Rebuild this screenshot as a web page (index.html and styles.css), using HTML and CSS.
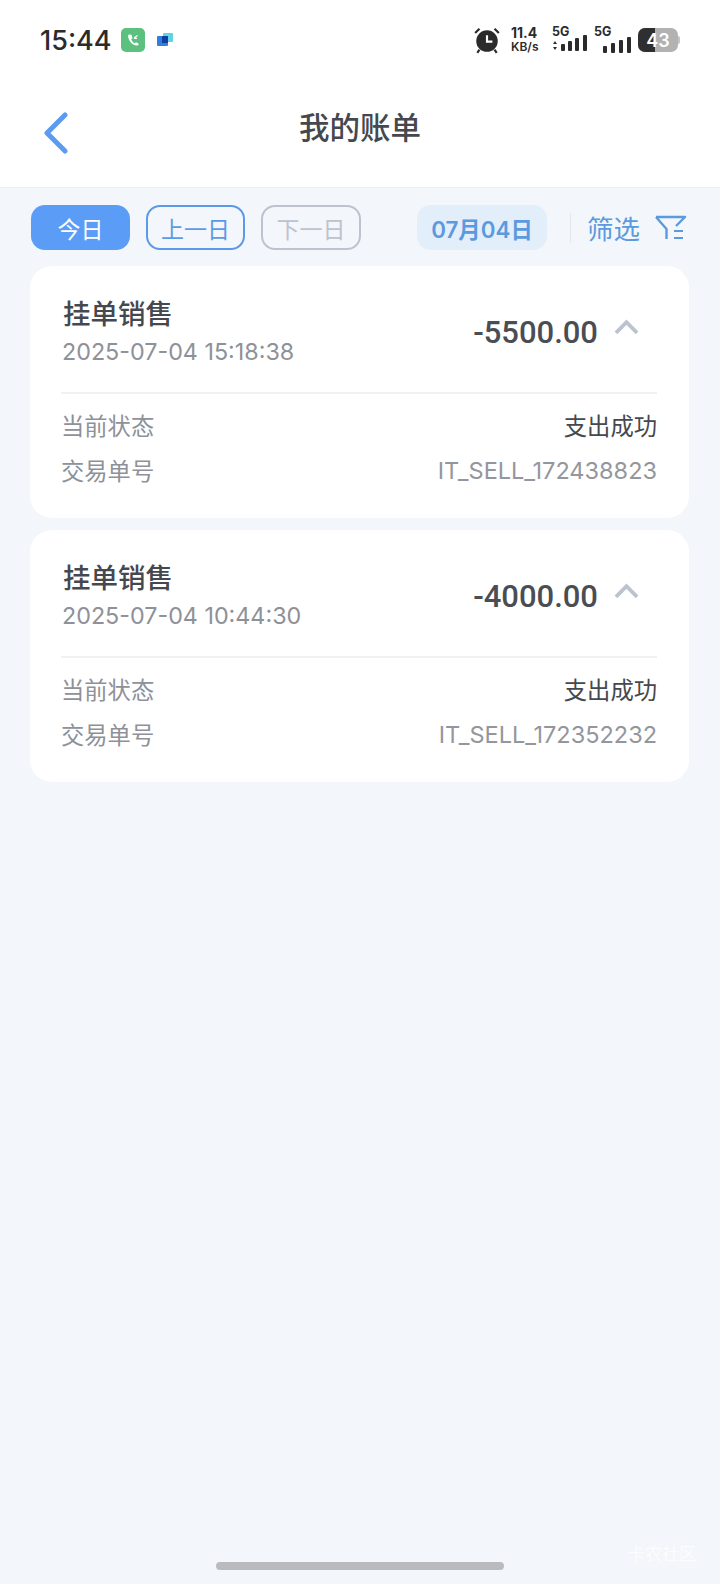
FILE: index.html
```html
<!DOCTYPE html>
<html lang="zh">
<head>
<meta charset="utf-8">
<title>我的账单</title>
<link rel="stylesheet" href="styles.css">
</head>
<body>
<div class="page">
  <header class="top">
    <div class="status">
      <div class="status-left">
        <span class="time">15:44</span>
        <svg class="app-icon" width="24" height="24" viewBox="0 0 24 24"><rect width="24" height="24" rx="5" fill="#5cc07f"/><path d="M7.500 6.500c-1 2 0 5 2 7.500s4.500 4 7 3.500c.8-.3 1.200-1 1.200-1.800l-2.700-1.500-1.500 1c-1.500-.8-2.800-2.500-3.300-4l1.300-1-1-3.500z" fill="#fff"/><path d="M13 10l3.500-2.500M13 10.300h3" stroke="#fff" stroke-width="1.200" fill="none"/></svg>
        <svg class="app-icon2" width="24" height="24" viewBox="0 0 24 24"><rect width="24" height="24" rx="4" fill="#fff"/><rect x="10" y="5" width="10" height="9" rx="1" fill="#5fd3e8"/><rect x="4" y="8" width="11" height="10" rx="1" fill="#2f7fdc"/><rect x="9" y="8" width="6" height="7" fill="#123f9e"/></svg>
      </div>
      <div class="status-right">
        <svg width="28" height="28" viewBox="0 0 26 26"><circle cx="13" cy="14" r="10" fill="#2b2b2b"/><path d="M13 8.500v6h5" stroke="#fff" stroke-width="2" fill="none"/><path d="M2 6.500L6 2.500M24 6.500L20 2.500M6 22l-2 3M20 22l2 3" stroke="#2b2b2b" stroke-width="2" fill="none"/></svg>
        <div class="speed"><span>11.4</span><span>KB/s</span></div>
        <div class="net">
          <span class="g">5G</span>
          <svg width="37" height="18" viewBox="0 0 37 18"><path d="M3 6L1 9h4zM3 15L1 12h4z" fill="#2b2b2b"/><rect x="9" y="9" width="4" height="7" rx="1" fill="#2b2b2b"/><rect x="16" y="6" width="4" height="10" rx="1" fill="#2b2b2b"/><rect x="23" y="3" width="4" height="13" rx="1" fill="#2b2b2b"/><rect x="31" y="0" width="4" height="16" rx="1" fill="#2b2b2b"/></svg>
        </div>
        <div class="net net2">
          <span class="g">5G</span>
          <svg width="28" height="16" viewBox="0 0 28 16"><rect x="0" y="9" width="4" height="7" rx="1" fill="#2b2b2b"/><rect x="8" y="6" width="4" height="10" rx="1" fill="#2b2b2b"/><rect x="16" y="3" width="4" height="13" rx="1" fill="#2b2b2b"/><rect x="24" y="0" width="4" height="16" rx="1" fill="#2b2b2b"/></svg>
        </div>
        <div class="battery"><span class="fill"></span><span class="level">43</span><span class="nub"></span></div>
      </div>
    </div>
    <div class="nav">
      <svg class="back" width="26" height="42" viewBox="0 0 26 42"><path d="M22 3L4 21l18 18" stroke="#5b9cf2" stroke-width="5" stroke-linecap="round" stroke-linejoin="round" fill="none"/></svg>
      <h1>我的账单</h1>
    </div>
  </header>

  <div class="toolbar">
    <span class="pill today">今日</span>
    <span class="pill prev">上一日</span>
    <span class="pill next">下一日</span>
    <span class="date">07月04日</span>
    <span class="sep"></span>
    <span class="filter">筛选</span>
    <svg class="filter-icon" width="32" height="26" viewBox="0 0 32 26"><path d="M1 2h29l-9 9M1 2l10.500 12v10" stroke="#5b9ade" stroke-width="2.400" fill="none" stroke-linejoin="round"/><path d="M19 16h9M19 23h9" stroke="#5b9ade" stroke-width="2.200" fill="none"/></svg>
  </div>

  <main class="list">
    <section class="card">
      <div class="card-head">
        <div class="head-left">
          <div class="title">挂单销售</div>
          <div class="stamp">2025-07-04 15:18:38</div>
        </div>
        <div class="amount">-5500.00</div>
        <svg class="chev" width="25" height="16" viewBox="0 0 26 16"><path d="M2 14L13 3l11 11" stroke="#bcc3cf" stroke-width="4" fill="none"/></svg>
      </div>
      <div class="row first"><span class="label">当前状态</span><span class="state">支出成功</span></div>
      <div class="row"><span class="label">交易单号</span><span class="order">IT_SELL_172438823</span></div>
    </section>
    <section class="card">
      <div class="card-head">
        <div class="head-left">
          <div class="title">挂单销售</div>
          <div class="stamp">2025-07-04 10:44:30</div>
        </div>
        <div class="amount">-4000.00</div>
        <svg class="chev" width="25" height="16" viewBox="0 0 26 16"><path d="M2 14L13 3l11 11" stroke="#bcc3cf" stroke-width="4" fill="none"/></svg>
      </div>
      <div class="row first"><span class="label">当前状态</span><span class="state">支出成功</span></div>
      <div class="row"><span class="label">交易单号</span><span class="order">IT_SELL_172352232</span></div>
    </section>
  </main>

  <footer class="foot">
    <div class="home"></div>
    <span class="mark">卡农社区</span>
  </footer>
</div>
</body>
</html>
```

FILE: styles.css
```css
* { box-sizing: border-box; }
html, body { margin: 0; padding: 0; }
body {
  width: 720px;
  height: 1584px;
  overflow: hidden;
  background: #f3f6fb;
  font-family: "Inter", "Noto Sans CJK SC", sans-serif;
  color: #45484e;
}
.page { height: 1584px; display: flex; flex-direction: column; }

.top { background: #fff; height: 188px; border-bottom: 1px solid #ebeef3; }
.status {
  height: 80px;
  padding: 0 42px 0 40px;
  display: flex;
  align-items: center;
  justify-content: space-between;
}
.status-left { display: flex; align-items: center; }
.time { font-size: 27px; font-weight: 500; color: #2b2b2b; width: 80px; }
.app-icon { margin-left: 1px; }
.app-icon2 { margin-left: 8px; }
.status-right { display: flex; align-items: center; }
.speed {
  margin-left: 10px;
  display: flex;
  flex-direction: column;
  font-weight: 700;
  color: #2b2b2b;
  line-height: 14px;
  width: 30px;
  white-space: nowrap;
}
.speed span:first-child { font-size: 14px; }
.speed span:last-child { font-size: 12px; font-weight: 600; }
.net { position: relative; width: 37px; height: 26px; margin-left: 11px; display: flex; align-items: flex-end; }
.net2 { margin-left: 5px; justify-content: flex-end; }
.g {
  position: absolute;
  left: 0;
  top: -2px;
  font-size: 12.500px;
  font-weight: 700;
  line-height: 14px;
  color: #2b2b2b;
}
.battery {
  position: relative;
  margin-left: 7px;
  width: 40px;
  height: 24px;
  border-radius: 7px;
  background: #b2b2b2;
  display: flex;
  align-items: center;
  justify-content: center;
}
.fill { position: absolute; left: 0; top: 0; bottom: 0; width: 17px; background: #2f2f2f; border-radius: 7px 0 0 7px; }
.level { position: relative; font-size: 18px; font-weight: 600; color: #fff; }
.nub { position: absolute; right: -2px; top: 8px; width: 2px; height: 8px; border-radius: 0 2px 2px 0; background: #c4c4c4; }

.nav { position: relative; height: 107px; display: flex; align-items: center; justify-content: center; }
.back { position: absolute; left: 43px; top: 32px; }
h1 { margin: 0 0 16px; font-size: 30.500px; font-weight: 500; color: #45484e; }

.toolbar { display: flex; align-items: center; padding: 17px 0 0 31px; height: 62px; }
.pill {
  width: 99px;
  height: 45px;
  border-radius: 14px;
  font-size: 23px;
  display: flex;
  align-items: center;
  justify-content: center;
  flex: none;
}
.today { background: #5b9cf6; color: #fff; }
.prev { margin-left: 16px; border: 2px solid #5b9ae8; color: #5b9ae8; }
.next { margin-left: 16px; width: 100px; border: 2px solid #bcc3cf; color: #bcc3cf; }
.date {
  margin-left: 56px;
  width: 130px;
  height: 45px;
  border-radius: 14px;
  background: #e3eefb;
  color: #5b9ade;
  font-size: 22.400px;
  font-weight: 600;
  display: flex;
  align-items: center;
  justify-content: center;
  flex: none;
}
.sep { margin-left: 23px; width: 1px; height: 30px; background: #e2e6ec; flex: none; }
.filter { margin-left: 16px; font-size: 26.500px; color: #5b9ade; width: 54px; flex: none; white-space: nowrap; }
.filter-icon { margin-left: 14px; flex: none; }

.list { display: flex; flex-direction: column; gap: 12px; padding: 16px 31px 0 30px; flex: 1; }
.card { background: #fff; border-radius: 22px; height: 252px; padding: 0 32px 0 31px; }
.card-head {
  height: 128px;
  display: flex;
  align-items: center;
  border-bottom: 2px solid #eff1f4;
}
.head-left { flex: 1; padding-left: 1px; }
.title { font-size: 27.500px; font-weight: 500; line-height: 38px; color: #45484e; margin-top: 6px; padding-left: 1px; }
.stamp { font-size: 23.300px; line-height: 37px; color: #8e9198; }
.amount { font-family: "Roboto", sans-serif; font-size: 31px; font-weight: 500; color: #4a4d54; margin-top: 6px; }
.chev { margin: -4px 18px 0 16px; }
.row {
  display: flex;
  justify-content: space-between;
  align-items: center;
  height: 45px;
  font-size: 23.300px;
}
.first { margin-top: 8px; }
.label { color: #8e9198; }
.state { color: #45484e; }
.order { color: #93969d; font-size: 23.500px; padding-top: 1px; }

.foot { position: relative; height: 44px; }
.home {
  position: absolute;
  left: 216px;
  top: 22px;
  width: 288px;
  height: 8px;
  border-radius: 4px;
  background: #b9bbbe;
}
.mark { position: absolute; right: 24px; top: 0; font-size: 17px; color: #fff; opacity: .8; }
```
